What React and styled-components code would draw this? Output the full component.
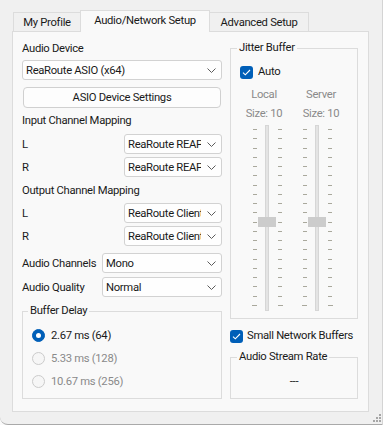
import React from "react"
import styled, { createGlobalStyle } from "styled-components"

const Global = createGlobalStyle`
  body {
    margin: 0;
    background: #fafafa;
    font-family: Roboto, "Noto Sans", sans-serif;
    font-size: 11.25px;
    letter-spacing: -0.3px;
    color: #1a1a1a;
  }
`

const Window = styled.div`
  position: relative;
  width: 383px;
  height: 425px;
  box-sizing: border-box;
  background: #f0f0f0;
  padding: 10px 0 0 12px;
  border-right: 1px solid #d4d4d4;
  border-bottom: 1px solid #a9a9a9;
  border-bottom-left-radius: 8px;
`

const TabStrip = styled.div`
  display: flex;
  align-items: flex-end;
  height: 22px;
  margin-left: 1px;
`

const Tab = styled.div`
  position: relative;
  z-index: ${p => (p.$active ? 2 : 0)};
  width: ${p => p.$w}px;
  height: ${p => (p.$active ? 22 : 20)}px;
  box-sizing: border-box;
  margin-left: ${p => (p.$first ? 0 : -1)}px;
  padding-bottom: ${p => (p.$active ? 2 : 0)}px;
  display: flex;
  align-items: center;
  justify-content: center;
  background: ${p => (p.$active ? "#f9f9f9" : "#f0f0f0")};
  border: 1px solid #dcdcdc;
  border-bottom: none;
  line-height: 16px;
  white-space: nowrap;
`

const Panel = styled.div`
  position: relative;
  z-index: 1;
  width: 357px;
  height: 381px;
  margin-top: -1px;
  box-sizing: border-box;
  background: #f9f9f9;
  border: 1px solid #dcdcdc;
  padding: 8px 10px 0 9px;
  display: flex;
  gap: 8px;
`

const Column = styled.div`
  width: ${p => p.$w}px;
  display: flex;
  flex-direction: column;
`

const Label = styled.div`
  height: 16px;
  line-height: 18px;
  margin-top: ${p => p.$mt || 0}px;
  white-space: nowrap;
`

const Row = styled.div`
  display: flex;
  align-items: center;
  justify-content: space-between;
  height: 20px;
  margin-top: ${p => p.$mt || 0}px;
  white-space: nowrap;
`

const ComboBox = styled.div`
  width: ${p => p.$w || 200}px;
  height: 20px;
  margin-top: ${p => p.$mt || 0}px;
  box-sizing: border-box;
  display: flex;
  align-items: center;
  padding-left: 3px;
  background: #fefefe;
  border: 1px solid #d2d2d2;
  border-radius: 3px;
`

const ComboText = styled.span`
  flex: 1;
  overflow: hidden;
  white-space: nowrap;
  line-height: 16px;
  padding-top: 2px;
`

const ChevronWrap = styled.span`
  width: 20px;
  display: flex;
  justify-content: flex-end;
  padding-right: 5px;
  box-sizing: border-box;
`

const PushButton = styled.div`
  width: 198px;
  height: 21px;
  margin: 7px 0 0 1px;
  box-sizing: border-box;
  display: flex;
  align-items: center;
  justify-content: center;
  background: #fdfdfd;
  border: 1px solid #d0d0d0;
  border-radius: 4px;
`

const Group = styled.fieldset`
  margin: ${p => p.$mt || 0}px 0 0 0;
  min-width: 0;
  border: 1px solid #dcdcdc;
  padding: ${p => p.$pad};
  display: flex;
  flex-direction: column;
`

const Legend = styled.legend`
  padding: 0 2px;
  margin-left: ${p => p.$ml}px;
  line-height: 16px;
`

const OptionRow = styled.div`
  display: flex;
  align-items: center;
  gap: ${p => p.$gap || 6}px;
  height: ${p => p.$h || 16}px;
  margin-top: ${p => p.$mt || 0}px;
  color: ${p => (p.$dim ? "#8a8a8a" : "#1a1a1a")};
  line-height: 16px;
  white-space: nowrap;
`

const Check = styled.span`
  width: 13px;
  height: 13px;
  border-radius: 3px;
  background: #005fb8;
  display: flex;
  align-items: center;
  justify-content: center;
  flex: none;
`

const RadioDot = styled.span`
  width: 13px;
  height: 13px;
  box-sizing: border-box;
  border-radius: 50%;
  flex: none;
  display: flex;
  align-items: center;
  justify-content: center;
  background: ${p => (p.$on ? "#005fb8" : "#f6f6f6")};
  border: 1px solid ${p => (p.$on ? "#005fb8" : "#cbcbcb")};
  &::after {
    content: "";
    display: ${p => (p.$on ? "block" : "none")};
    width: 5px;
    height: 5px;
    border-radius: 50%;
    background: #fff;
  }
`

const CaptionRow = styled.div`
  display: flex;
  gap: 9px;
  margin-top: ${p => p.$mt}px;
  color: #8a8a8a;
`

const Caption = styled.div`
  width: 48px;
  height: 16px;
  line-height: 17px;
  text-align: center;
  white-space: nowrap;
`

const SliderRow = styled.div`
  display: flex;
  gap: 19px;
  margin: 4px 0 0 12px;
`

const Slider = styled.div`
  display: flex;
  height: 186px;
`

const Ticks = styled.div`
  width: 5px;
  height: 177px;
  margin-top: 4px;
  display: flex;
  flex-direction: column;
  justify-content: space-between;
  align-items: ${p => (p.$side === "left" ? "flex-end" : "flex-start")};
`

const Tick = styled.span`
  display: block;
  width: ${p => (p.$long ? 5 : 4)}px;
  height: 1px;
  background: #a9a89c;
`

const Track = styled.div`
  position: relative;
  width: 4px;
  height: 186px;
  margin: 0 9px 0 8px;
  box-sizing: border-box;
  background: #e4e4e4;
  border: 1px solid #d6d6d6;
`

const Thumb = styled.span`
  position: absolute;
  left: -8px;
  top: 91px;
  width: 18px;
  height: 10px;
  background: #cccccc;
`

const RateValue = styled.div`
  height: 33px;
  display: flex;
  align-items: center;
  justify-content: center;
  margin-left: -9px;
`

const Grip = styled.svg`
  position: absolute;
  right: 1px;
  bottom: 2px;
`

const Chevron = () => (
  <svg width="9" height="5" viewBox="0 0 9 5">
    <polyline points="0.5,0.5 4.5,4.5 8.5,0.5" fill="none" stroke="#5c5c5c" strokeWidth="1" />
  </svg>
)

const Combo = ({ value, w, mt }) => (
  <ComboBox $w={w} $mt={mt}>
    <ComboText>{value}</ComboText>
    <ChevronWrap>
      <Chevron />
    </ChevronWrap>
  </ComboBox>
)

const CheckBox = () => (
  <Check>
    <svg width="9" height="7" viewBox="0 0 9 7">
      <polyline points="1,3.6 3.3,5.8 8,1" fill="none" stroke="#fff" strokeWidth="1.1" />
    </svg>
  </Check>
)

const VSlider = () => (
  <Slider>
    <Ticks $side="left">
      {Array.from({ length: 20 }, (_, i) => <Tick key={i} $long={i === 19} />)}
    </Ticks>
    <Track>
      <Thumb />
    </Track>
    <Ticks $side="right">
      {Array.from({ length: 20 }, (_, i) => <Tick key={i} $long={i === 19} />)}
    </Ticks>
  </Slider>
)

const buffers = [
  { label: "2.67 ms (64)", on: true },
  { label: "5.33 ms (128)" },
  { label: "10.67 ms (256)" },
]

export default function App() {
  return (
    <Window>
      <Global />
      <TabStrip>
        <Tab $w={68} $first>My Profile</Tab>
        <Tab $w={130} $active>Audio/Network Setup</Tab>
        <Tab $w={100}>Advanced Setup</Tab>
      </TabStrip>
      <Panel>
        <Column $w={200}>
          <Label>Audio Device</Label>
          <Combo value="ReaRoute ASIO (x64)" mt={4} />
          <PushButton>ASIO Device Settings</PushButton>

          <Label $mt={4}>Input Channel Mapping</Label>
          <Row $mt={6}>
            <span>L</span>
            <Combo value="ReaRoute REAPER 1" w={98} />
          </Row>
          <Row $mt={3}>
            <span>R</span>
            <Combo value="ReaRoute REAPER 2" w={98} />
          </Row>

          <Label $mt={5}>Output Channel Mapping</Label>
          <Row $mt={5}>
            <span>L</span>
            <Combo value="ReaRoute Client 1" w={98} />
          </Row>
          <Row $mt={3}>
            <span>R</span>
            <Combo value="ReaRoute Client 2" w={98} />
          </Row>

          <Row $mt={7}>
            <span>Audio Channels</span>
            <Combo value="Mono" w={120} />
          </Row>
          <Row $mt={4}>
            <span>Audio Quality</span>
            <Combo value="Normal" w={120} />
          </Row>

          <Group $mt={6} $pad="5px 9px 5px 9px">
            <Legend $ml={-4}>Buffer Delay</Legend>
            {buffers.map(b => (
              <OptionRow key={b.label} $h={23} $dim={!b.on}>
                <RadioDot $on={b.on} />
                {b.label}
              </OptionRow>
            ))}
          </Group>
        </Column>

        <Column $w={128}>
          <Group $pad="8px 0 7px 9px">
            <Legend $ml={-3}>Jitter Buffer</Legend>
            <OptionRow $gap={5}>
              <CheckBox />
              Auto
            </OptionRow>
            <CaptionRow $mt={6}>
              <Caption>Local</Caption>
              <Caption>Server</Caption>
            </CaptionRow>
            <CaptionRow $mt={3}>
              <Caption>Size: 10</Caption>
              <Caption>Size: 10</Caption>
            </CaptionRow>
            <SliderRow>
              <VSlider />
              <VSlider />
            </SliderRow>
          </Group>

          <OptionRow $mt={9} $gap={4}>
            <CheckBox />
            Small Network Buffers
          </OptionRow>

          <Group $mt={5} $pad="0 0 0 9px">
            <Legend $ml={-3}>Audio Stream Rate</Legend>
            <RateValue>---</RateValue>
          </Group>
        </Column>
      </Panel>
      <Grip width="9" height="9" viewBox="0 0 9 9">
        <g fill="#a6a6a6">
          <rect x="7" y="1" width="2" height="2" />
          <rect x="4" y="4" width="2" height="2" />
          <rect x="7" y="4" width="2" height="2" />
          <rect x="1" y="7" width="2" height="2" />
          <rect x="4" y="7" width="2" height="2" />
          <rect x="7" y="7" width="2" height="2" />
        </g>
      </Grip>
    </Window>
  )
}
